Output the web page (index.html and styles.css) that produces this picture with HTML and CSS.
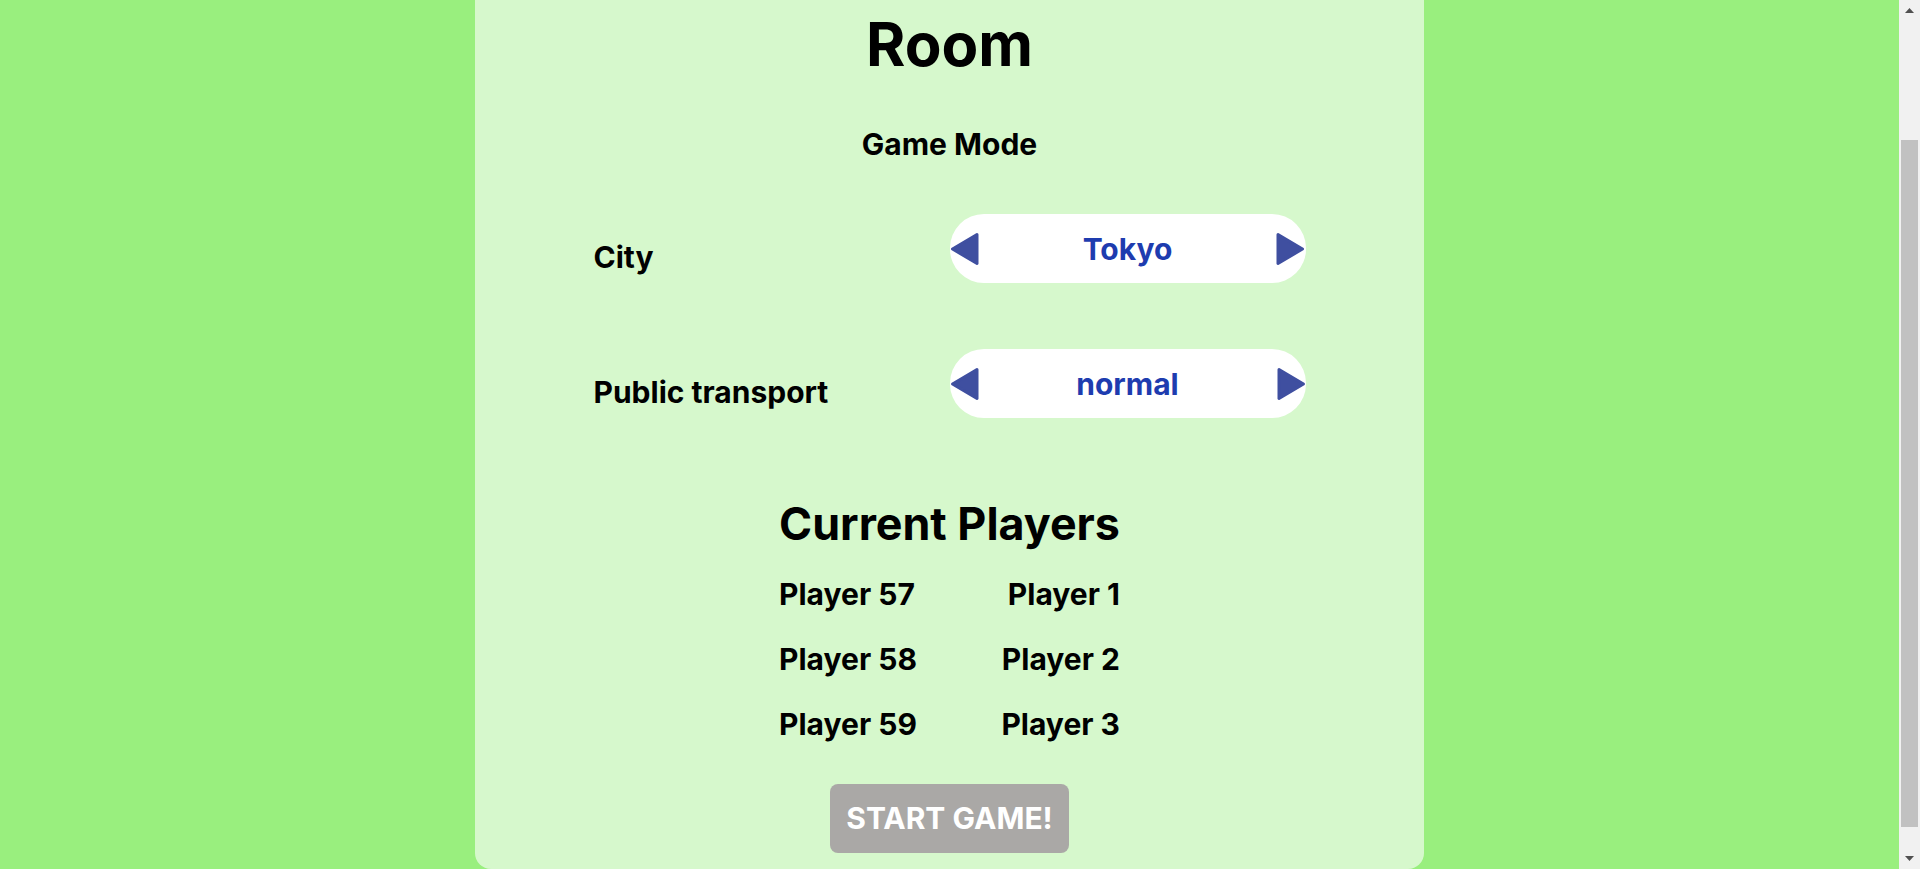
FILE: index.html
```html
<!DOCTYPE html>
<html lang="en">
<head>
<meta charset="utf-8">
<title>Room</title>
<link rel="stylesheet" href="styles.css">
</head>
<body>
<div class="window">
  <main class="viewport">
    <section class="room">
      <h1 class="room-title">Room</h1>
      <h2 class="section-title">Game Mode</h2>
      <div class="settings">
        <div class="setting-row">
          <span class="setting-label">City</span>
          <div class="selector">
            <button class="arrow" aria-label="Previous city">
              <svg viewBox="0 0 30 34" width="30" height="34"><path d="M27 2.5 L2.5 17 L27 31.5 Z" /></svg>
            </button>
            <span class="selector-value">Tokyo</span>
            <button class="arrow" aria-label="Next city">
              <svg viewBox="0 0 30 34" width="30" height="34"><path d="M3 2.5 L27.5 17 L3 31.5 Z" /></svg>
            </button>
          </div>
        </div>
        <div class="setting-row">
          <span class="setting-label">Public transport</span>
          <div class="selector">
            <button class="arrow" aria-label="Previous option">
              <svg viewBox="0 0 30 34" width="30" height="34"><path d="M27 2.5 L2.5 17 L27 31.5 Z" /></svg>
            </button>
            <span class="selector-value">normal</span>
            <button class="arrow" aria-label="Next option">
              <svg viewBox="0 0 30 34" width="30" height="34"><path d="M3 2.5 L27.5 17 L3 31.5 Z" /></svg>
            </button>
          </div>
        </div>
      </div>
      <div class="players">
        <h2 class="players-title">Current Players</h2>
        <ul class="player-list">
          <li>Player 57</li>
          <li class="player-right">Player 1</li>
          <li>Player 58</li>
          <li class="player-right">Player 2</li>
          <li>Player 59</li>
          <li class="player-right">Player 3</li>
        </ul>
      </div>
      <button class="start-btn" disabled>START GAME!</button>
    </section>
  </main>
  <div class="scrollbar" aria-hidden="true">
    <div class="scroll-btn">
      <svg viewBox="0 0 9 5" width="9" height="5"><path d="M0 5 L4.5 0 L9 5 Z" /></svg>
    </div>
    <div class="scroll-track">
      <div class="scroll-thumb"></div>
    </div>
    <div class="scroll-btn">
      <svg viewBox="0 0 9 5" width="9" height="5"><path d="M0 0 L4.5 5 L9 0 Z" /></svg>
    </div>
  </div>
</div>
</body>
</html>
```

FILE: styles.css
```css
html, body {
  margin: 0;
  padding: 0;
  height: 100%;
  overflow: hidden;
}

body {
  background: #99ef7e;
  font-family: "Inter", "Liberation Sans", sans-serif;
  color: #000;
}

.window {
  display: flex;
  height: 100vh;
}

.viewport {
  flex: 1;
  display: flex;
  flex-direction: column;
  justify-content: flex-end;
  align-items: center;
  overflow: hidden;
}

.room {
  flex-shrink: 0;
  width: 949px;
  background: #d6f8cc;
  border-radius: 16px;
  padding: 150px 0 16px;
  display: flex;
  flex-direction: column;
  align-items: center;
}

.room-title {
  margin: 0;
  font-size: 60px;
  line-height: 72px;
  font-weight: 700;
}

.section-title {
  margin: 46px 0 0;
  font-size: 30px;
  line-height: 36px;
  font-weight: 700;
}

.settings {
  width: 712px;
  margin-top: 52px;
  display: flex;
  flex-direction: column;
  gap: 66px;
}

.setting-row {
  display: grid;
  grid-template-columns: 1fr 356px;
  align-items: center;
}

.setting-label {
  font-size: 30px;
  line-height: 36px;
  font-weight: 700;
  padding-top: 16px;
}

.selector {
  height: 69px;
  background: #fff;
  border-radius: 34px;
  display: flex;
  align-items: center;
  justify-content: space-between;
}

.arrow {
  border: 0;
  background: none;
  padding: 0;
  width: 30px;
  height: 34px;
  display: flex;
  cursor: pointer;
}

.arrow svg {
  fill: #3f4fa0;
  stroke: #3f4fa0;
  stroke-width: 3;
  stroke-linejoin: round;
}

.selector-value {
  font-size: 30px;
  line-height: 36px;
  font-weight: 700;
  color: #1e3caf;
}

.players {
  margin-top: 79px;
  width: fit-content;
}

.players-title {
  margin: 0;
  font-size: 44.8px;
  line-height: 54px;
  font-weight: 700;
}

.player-list {
  list-style: none;
  margin: 25px 0 0;
  padding: 0;
  display: grid;
  grid-template-columns: auto auto;
  justify-content: space-between;
  row-gap: 29px;
  font-size: 30px;
  line-height: 36px;
  font-weight: 700;
}

.player-right {
  justify-self: end;
}

.start-btn {
  margin-top: 42px;
  border: 0;
  border-radius: 8px;
  background: #aaa8a6;
  color: #fff;
  font-family: inherit;
  font-size: 30px;
  line-height: 37px;
  font-weight: 700;
  padding: 16px;
}

.scrollbar {
  width: 21px;
  flex-shrink: 0;
  background: #f1f1f1;
  display: flex;
  flex-direction: column;
}

.scroll-btn {
  height: 21px;
  display: flex;
  align-items: center;
  justify-content: center;
}

.scroll-btn svg {
  fill: #505050;
}

.scroll-track {
  flex: 1;
  display: flex;
  flex-direction: column;
}

.scroll-thumb {
  margin: 119px 2px 0;
  height: 687px;
  background: #c1c1c1;
}
```
